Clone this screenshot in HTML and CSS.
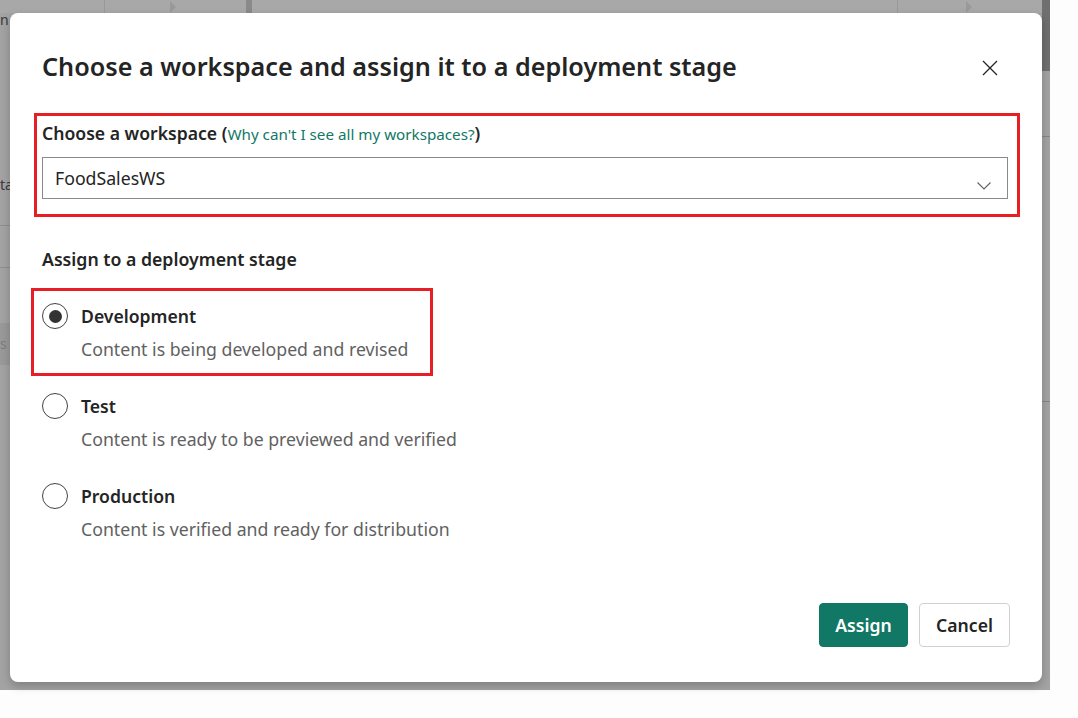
FILE: index.html
```html
<!DOCTYPE html>
<html lang="en">
<head>
<meta charset="utf-8">
<title>Choose a workspace</title>
<link rel="stylesheet" href="styles.css">
</head>
<body>
<div class="backdrop">
  <div class="bg-tabs">
    <span class="bg-tab bg-tab-a"></span>
    <span class="bg-tab bg-tab-b"><i class="bg-chev"></i></span>
    <span class="bg-bar"></span>
    <span class="bg-tab bg-tab-c"></span>
    <span class="bg-tab bg-tab-d"><i class="bg-chev"></i></span>
  </div>
  <span class="bg-text bg-m">n</span>
  <span class="bg-text bg-ta">ta</span>
  <span class="bg-line bg-l1"></span>
  <span class="bg-line bg-l2"></span>
  <span class="bg-sblock"><span class="bg-text bg-s">s</span></span>
  <span class="bg-scroll"></span>
  <span class="bg-rline bg-r1"></span>
  <span class="bg-rline bg-r2"></span>

  <div class="dialog" role="dialog" aria-labelledby="dlg-title">
    <div class="dialog-head">
      <h1 id="dlg-title" class="dialog-title">Choose a workspace and assign it to a deployment stage</h1>
      <button class="close-btn" aria-label="Close">
        <svg width="16" height="16" viewBox="0 0 16 16"><path d="M1 1 L15 15 M15 1 L1 15" stroke="#242424" stroke-width="1.3" fill="none"/></svg>
      </button>
    </div>

    <div class="mark ws-mark">
      <div class="field-label">Choose a workspace (<a class="link" href="#">Why can't I see all my workspaces?</a>)</div>
      <div class="select">
        <span class="select-value">FoodSalesWS</span>
        <svg class="chev" width="14" height="8" viewBox="0 0 14 8"><path d="M0.5 0.5 L7 7 L13.5 0.5" stroke="#616161" stroke-width="1.1" fill="none"/></svg>
      </div>
    </div>

    <div class="section-label">Assign to a deployment stage</div>

    <div class="options">
      <div class="option marked">
        <span class="radio checked"><span class="dot"></span></span>
        <div class="opt-text">
          <div class="opt-title">Development</div>
          <div class="opt-desc">Content is being developed and revised</div>
        </div>
      </div>
      <div class="option">
        <span class="radio"></span>
        <div class="opt-text">
          <div class="opt-title">Test</div>
          <div class="opt-desc">Content is ready to be previewed and verified</div>
        </div>
      </div>
      <div class="option">
        <span class="radio"></span>
        <div class="opt-text">
          <div class="opt-title">Production</div>
          <div class="opt-desc">Content is verified and ready for distribution</div>
        </div>
      </div>
    </div>

    <div class="footer">
      <button class="btn btn-primary">Assign</button>
      <button class="btn btn-secondary">Cancel</button>
    </div>
  </div>
</div>
</body>
</html>
```

FILE: styles.css
```css
* { box-sizing: border-box; }
html, body { margin: 0; padding: 0; }
body {
  background: #fdfdfd;
  font-family: "Noto Sans", "Open Sans", sans-serif;
  color: #242424;
  width: 1078px;
  height: 718px;
  overflow: hidden;
}

.backdrop {
  position: relative;
  width: 1050px;
  height: 690px;
  background: #a3a3a3;
}

/* faint background app under the overlay */
.bg-tabs {
  height: 13px;
  background: #a8a8a8;
}
.bg-tab { position: absolute; top: 0; height: 13px; border-left: 1px solid #999; }
.bg-tab-a { left: 104px; }
.bg-tab-b { left: 170px; border-left: none; }
.bg-tab-c { left: 897px; }
.bg-tab-d { left: 966px; border-left: none; }
.bg-chev {
  display: block;
  width: 0; height: 0;
  margin-top: 1px;
  border-top: 6px solid transparent;
  border-bottom: 6px solid transparent;
  border-left: 6px solid #999;
}
.bg-bar { position: absolute; left: 246px; top: 0; width: 6px; height: 13px; background: #8a8a8a; }
.bg-text { position: absolute; font-size: 14px; line-height: 16px; color: #3a3a3a; }
.bg-m { left: 0; top: 12px; }
.bg-ta { left: 0; top: 177px; }
.bg-line { position: absolute; left: 0; width: 10px; height: 1px; background: #8e8e8e; }
.bg-l1 { top: 225px; }
.bg-l2 { top: 267px; }
.bg-sblock { position: absolute; left: 0; top: 323px; width: 10px; height: 42px; background: #999; }
.bg-s { left: 0; top: 13px; color: #7d7d7d; }
.bg-scroll { position: absolute; left: 1042px; top: 0; width: 8px; height: 71px; background: #6f6f6f; }
.bg-rline { position: absolute; left: 1042px; width: 8px; height: 1px; background: #868686; }
.bg-r1 { top: 136px; }
.bg-r2 { top: 401px; }

/* dialog */
.dialog {
  position: absolute;
  left: 10px;
  top: 13px;
  width: 1032px;
  height: 669px;
  background: #fff;
  border-radius: 8px;
  box-shadow: 0 4px 10px rgba(0,0,0,0.22);
  padding: 35px 32px 35px 32px;
  display: flex;
  flex-direction: column;
}

.dialog-head {
  display: flex;
  align-items: center;
  justify-content: space-between;
  height: 36px;
}
.dialog-title {
  margin: 0;
  font-size: 25.2px;
  font-weight: 600;
  line-height: 36px;
  color: #242424;
}
.close-btn {
  border: none;
  background: none;
  padding: 0;
  width: 16px;
  height: 16px;
  margin-right: 12px;
  margin-top: 4px;
  display: flex;
}

.mark {
  border: 3px solid #e81e25;
}
.ws-mark {
  margin: 29px -10px 0 -8px;
  padding: 6px 9px 15px 5px;
}
.field-label {
  font-size: 17.6px;
  font-weight: 600;
  line-height: 22px;
}
.link {
  color: #117865;
  font-weight: 400;
  font-size: 15.2px;
  text-decoration: none;
}
.select {
  margin-top: 12px;
  height: 42px;
  border: 1px solid #8a8a8a;
  display: flex;
  align-items: center;
  justify-content: space-between;
  padding: 0 16px 0 12px;
}
.select-value { font-size: 17.7px; color: #242424; }
.chev { margin-top: 15px; }

.section-label {
  margin-top: 31px;
  font-size: 17.7px;
  font-weight: 600;
  line-height: 22px;
}

.options {
  margin: 18px 0 0 -11px;
  display: flex;
  flex-direction: column;
  gap: 2px;
}
.option {
  width: 402px;
  border: 3px solid transparent;
  padding: 12px 8px 11px 8px;
  display: flex;
  gap: 13px;
  align-items: flex-start;
}
.option.marked { border-color: #e81e25; }
.radio {
  flex: none;
  width: 26px;
  height: 26px;
  border: 1px solid #424242;
  border-radius: 50%;
  display: flex;
  align-items: center;
  justify-content: center;
}
.dot {
  width: 13px;
  height: 13px;
  border-radius: 50%;
  background: #333;
}
.opt-title {
  font-size: 17.6px;
  font-weight: 600;
  line-height: 26px;
  color: #242424;
}
.opt-desc {
  margin-top: 7px;
  font-size: 17.7px;
  line-height: 26px;
  color: #616161;
  white-space: nowrap;
}

.footer {
  margin-top: auto;
  display: flex;
  justify-content: flex-end;
  gap: 11px;
}
.btn {
  height: 44px;
  border-radius: 4px;
  font-family: inherit;
  font-size: 17.6px;
  font-weight: 600;
  padding: 0;
  cursor: pointer;
}
.btn-primary {
  background: #117865;
  color: #fff;
  border: 1px solid #117865;
  width: 89px;
}
.btn-secondary {
  background: #fff;
  color: #242424;
  border: 1px solid #d1d1d1;
  width: 91px;
}
```
